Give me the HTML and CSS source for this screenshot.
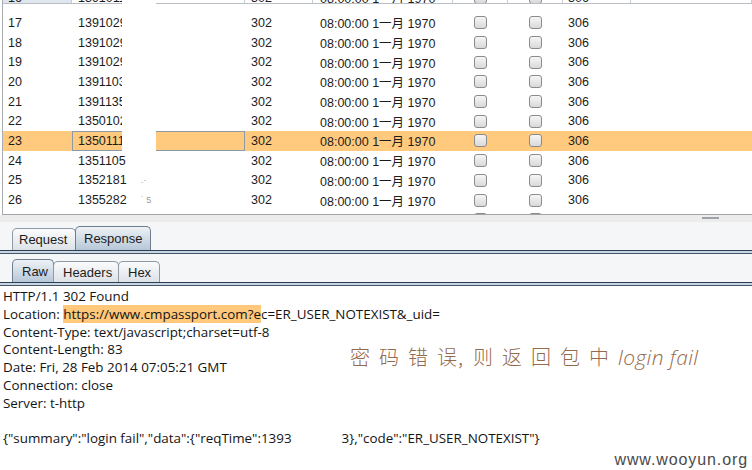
FILE: index.html
```html
<!DOCTYPE html>
<html>
<head>
<meta charset="utf-8">
<link rel="stylesheet" href="styles.css">
</head>
<body>
<div class="page">
  <div class="table">
    <div class="strip">
      <div class="row row-cut">
        <div class="c c1 hdr">16</div><div class="c c2">13910117</div><div class="c c3">302</div><div class="c c4">08:00:00 1一月 1970</div><div class="c c5"><span class="cb"></span></div><div class="c c6"><span class="cb"></span></div><div class="c c7">306</div><div class="c c8"></div>
      </div>
    </div>
    <div class="rows">
      <div class="row"><div class="c c1">17</div><div class="c c2">13910290</div><div class="c c3">302</div><div class="c c4">08:00:00 1一月 1970</div><div class="c c5"><span class="cb"></span></div><div class="c c6"><span class="cb"></span></div><div class="c c7">306</div><div class="c c8"></div></div>
      <div class="row"><div class="c c1">18</div><div class="c c2">13910290</div><div class="c c3">302</div><div class="c c4">08:00:00 1一月 1970</div><div class="c c5"><span class="cb"></span></div><div class="c c6"><span class="cb"></span></div><div class="c c7">306</div><div class="c c8"></div></div>
      <div class="row"><div class="c c1">19</div><div class="c c2">13910290</div><div class="c c3">302</div><div class="c c4">08:00:00 1一月 1970</div><div class="c c5"><span class="cb"></span></div><div class="c c6"><span class="cb"></span></div><div class="c c7">306</div><div class="c c8"></div></div>
      <div class="row"><div class="c c1">20</div><div class="c c2">13911033</div><div class="c c3">302</div><div class="c c4">08:00:00 1一月 1970</div><div class="c c5"><span class="cb"></span></div><div class="c c6"><span class="cb"></span></div><div class="c c7">306</div><div class="c c8"></div></div>
      <div class="row"><div class="c c1">21</div><div class="c c2">13911355</div><div class="c c3">302</div><div class="c c4">08:00:00 1一月 1970</div><div class="c c5"><span class="cb"></span></div><div class="c c6"><span class="cb"></span></div><div class="c c7">306</div><div class="c c8"></div></div>
      <div class="row"><div class="c c1">22</div><div class="c c2">13501022</div><div class="c c3">302</div><div class="c c4">08:00:00 1一月 1970</div><div class="c c5"><span class="cb"></span></div><div class="c c6"><span class="cb"></span></div><div class="c c7">306</div><div class="c c8"></div></div>
      <div class="row sel"><div class="c c1">23</div><div class="c c2 focus">13501111</div><div class="c c3">302</div><div class="c c4">08:00:00 1一月 1970</div><div class="c c5"><span class="cb"></span></div><div class="c c6"><span class="cb"></span></div><div class="c c7">306</div><div class="c c8"></div></div>
      <div class="row"><div class="c c1">24</div><div class="c c2">1351105</div><div class="c c3">302</div><div class="c c4">08:00:00 1一月 1970</div><div class="c c5"><span class="cb"></span></div><div class="c c6"><span class="cb"></span></div><div class="c c7">306</div><div class="c c8"></div></div>
      <div class="row"><div class="c c1">25</div><div class="c c2">1352181 <span class="frag">.·</span></div><div class="c c3">302</div><div class="c c4">08:00:00 1一月 1970</div><div class="c c5"><span class="cb"></span></div><div class="c c6"><span class="cb"></span></div><div class="c c7">306</div><div class="c c8"></div></div>
      <div class="row"><div class="c c1">26</div><div class="c c2">1355282 <span class="frag">˙ 5</span></div><div class="c c3">302</div><div class="c c4">08:00:00 1一月 1970</div><div class="c c5"><span class="cb"></span></div><div class="c c6"><span class="cb"></span></div><div class="c c7">306</div><div class="c c8"></div></div>
      <div class="row"><div class="c c1">27</div><div class="c c2">1355290</div><div class="c c3">302</div><div class="c c4">08:00:00 1一月 1970</div><div class="c c5"><span class="cb"></span></div><div class="c c6"><span class="cb"></span></div><div class="c c7">306</div><div class="c c8"></div></div>
    </div>
    <div class="redact"></div>
  </div>
  <div class="hscroll"><span class="thumb"></span></div>
  <div class="tabpane">
    <div class="tabbar">
      <div class="tab">Request</div>
      <div class="tab active">Response</div>
    </div>
    <div class="sep"></div>
    <div class="tabbar">
      <div class="tab active small">Raw</div>
      <div class="tab">Headers</div>
      <div class="tab">Hex</div>
    </div>
    <div class="sep"></div>
  </div>
  <div class="raw">
    <div class="line">HTTP/1.1 302 Found</div>
    <div class="line">Location: <span class="hl">https://www.cmpassport.com?e</span>c=ER_USER_NOTEXIST&amp;_uid=</div>
    <div class="line">Content-Type: text/javascript;charset=utf-8</div>
    <div class="line">Content-Length: 83</div>
    <div class="line">Date: Fri, 28 Feb 2014 07:05:21 GMT</div>
    <div class="line">Connection: close</div>
    <div class="line">Server: t-http</div>
    <div class="line">&nbsp;</div>
    <div class="line">{"summary":"login fail","data":{"reqTime":1393<span class="gap"></span>3},"code":"ER_USER_NOTEXIST"}</div>
  </div>
  <div class="note"><span class="cn">密码错<span class="tight">误</span><span class="comma">,</span>则返回包中</span><span class="en">login fail</span></div>
  <div class="mark">www.wooyun.org</div>
</div>
</body>
</html>
```
FILE: styles.css
```css
html, body {
  margin: 0;
  padding: 0;
  background: #ffffff;
}
.page {
  position: relative;
  width: 752px;
  height: 470px;
  overflow: hidden;
  font-family: "Liberation Sans", "Noto Sans CJK SC", sans-serif;
  color: #1c1c1c;
}
.table {
  position: relative;
  margin-left: 2px;
  height: 214px;
  border-left: 1px solid #a9adb2;
  border-bottom: 1px solid #a0a4a8;
  overflow: hidden;
  font-size: 12.5px;
}
.strip {
  height: 3px;
  overflow: hidden;
  border-bottom: 1px solid #b9bec4;
}
.row-cut {
  margin-top: -12px;
}
.row-cut .c {
  border-right: 1px solid #c9cdd2;
}
.row-cut .hdr {
  background: #dfe6ee;
}
.rows {
  padding-top: 9px;
}
.row {
  display: grid;
  grid-template-columns: 69px 173px 68px 140px 55px 55px 68px 1fr;
  height: 19.7px;
  align-items: stretch;
}
.c {
  display: flex;
  align-items: center;
  box-sizing: border-box;
  white-space: nowrap;
  overflow: hidden;
}
.c1 { padding-left: 5px; }
.c2 { padding-left: 6px; }
.c3 { padding-left: 6px; }
.c4 { padding-left: 7px; }
.c5, .c6 { justify-content: center; }
.c7 { padding-left: 5px; }
.sel {
  background: #ffc97e;
}
.focus {
  border: 1px solid #8c9aa8;
  padding-left: 5px;
}
.cb {
  display: block;
  width: 13px;
  height: 13px;
  box-sizing: border-box;
  border: 1px solid #8b8b8b;
  border-radius: 3px;
  background: linear-gradient(#f6f6f6, #d9d9d9);
}
.frag {
  color: #9a9a9a;
  font-size: 9px;
  margin-left: 14px;
}
.redact {
  position: absolute;
  left: 119px;
  top: 0;
  width: 34px;
  height: 152px;
  background: #ffffff;
}
.hscroll {
  height: 7px;
  background: #ececec;
  display: flex;
  justify-content: flex-end;
  padding-right: 33px;
  box-sizing: border-box;
}
.thumb {
  width: 17px;
  height: 2px;
  margin-top: 2px;
  background: #9da3a8;
}
.tabpane {
  background: #f5f6f7;
}
.tabbar {
  display: flex;
  align-items: flex-end;
  height: 28px;
  padding-left: 12px;
}
.tab {
  box-sizing: border-box;
  height: 22px;
  padding: 0 6px;
  display: flex;
  align-items: center;
  border: 1px solid #8f9aa6;
  border-bottom: none;
  border-radius: 5px 5px 0 0;
  background: linear-gradient(#fafbfc, #dde2e7);
  font-size: 13px;
  color: #1c1c1c;
  margin-right: -1px;
}
.tabbar:first-child .tab { width: 64px; padding-left: 6px; }
.tabbar:first-child .tab.active { width: 76px; padding-left: 8px; height: 24px; }
.tab.active {
  height: 24px;
  border-color: #6f7e8e;
  background: linear-gradient(#eef2f6, #b6c7d8);
}
.tabbar:nth-child(3) .tab { height: 21px; }
.tabbar:nth-child(3) .tab.active { height: 23px; width: 42px; padding-left: 9px; }
.tabbar:nth-child(3) .tab:nth-child(2) { width: 66px; padding-left: 9px; }
.tabbar:nth-child(3) .tab:nth-child(3) { width: 42px; padding-left: 9px; }
.sep {
  height: 2px;
  border-top: 1px solid #2f3e53;
  border-bottom: 1px solid #46566a;
  background: #c7d4e1;
}
.raw {
  padding: 2px 0 0 3px;
  font-family: "Open Sans", "Noto Sans", sans-serif;
  font-size: 13.4px;
  line-height: 17.75px;
  color: #141414;
}
.hl {
  background: #ffc87a;
}
.gap {
  display: inline-block;
  width: 50px;
}
.note {
  position: absolute;
  left: 350px;
  top: 342px;
  color: #946a4c;
  white-space: nowrap;
}
.cn {
  font-family: "Noto Sans CJK SC", sans-serif;
  font-weight: 300;
  font-size: 20px;
  letter-spacing: 9px;
}
.tight {
  letter-spacing: 1px;
}
.comma {
  letter-spacing: 10px;
}
.en {
  font-family: "Open Sans", sans-serif;
  font-style: italic;
  font-weight: 300;
  font-size: 21px;
  letter-spacing: 0.4px;
}
.mark {
  position: absolute;
  right: 4px;
  bottom: 1px;
  font-family: "Liberation Sans", sans-serif;
  font-size: 16px;
  letter-spacing: 0.9px;
  color: #4a4a4a;
}
```
